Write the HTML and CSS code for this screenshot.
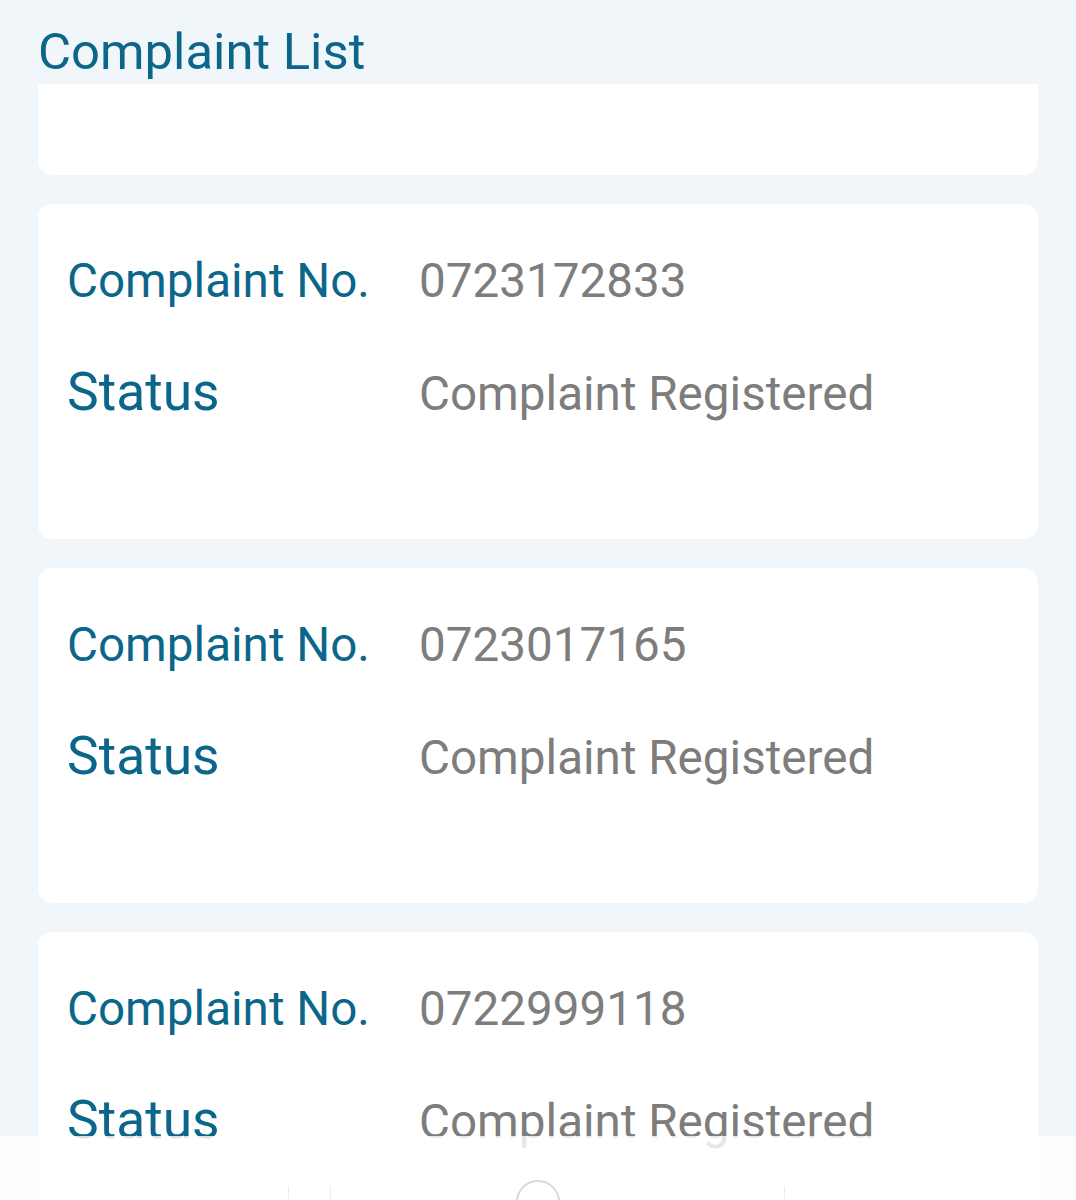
FILE: index.html
```html
<!DOCTYPE html>
<html lang="en">
<head>
<meta charset="utf-8">
<title>Complaint List</title>
<link rel="stylesheet" href="styles.css">
</head>
<body>
<header class="top">
  <h1 class="title">Complaint List</h1>
</header>
<main class="list">
  <div class="card card-partial"></div>
  <div class="card">
    <div class="row"><span class="label">Complaint No.</span><span class="value">0723172833</span></div>
    <div class="row"><span class="label label-big">Status</span><span class="value">Complaint Registered</span></div>
  </div>
  <div class="card">
    <div class="row"><span class="label">Complaint No.</span><span class="value">0723017165</span></div>
    <div class="row"><span class="label label-big">Status</span><span class="value">Complaint Registered</span></div>
  </div>
  <div class="card">
    <div class="row"><span class="label">Complaint No.</span><span class="value">0722999118</span></div>
    <div class="row"><span class="label label-big">Status</span><span class="value">Complaint Registered</span></div>
  </div>
</main>
<div class="navbar">
  <span class="tick tick-a"></span>
  <span class="tick tick-b"></span>
  <span class="home"></span>
  <span class="tick tick-c"></span>
</div>
</body>
</html>
```
FILE: styles.css
```css
html, body {
  margin: 0;
  padding: 0;
  background: #f1f6fa;
  font-family: Roboto, "Noto Sans", Arial, sans-serif;
  height: 1200px;
  overflow: hidden;
}
.top {
  height: 84px;
  padding-left: 38px;
  box-sizing: border-box;
  background: #f1f6fa;
}
.title {
  margin: 0;
  font-weight: 400;
  font-size: 50.8px;
  line-height: 50px;
  padding-top: 27px;
  color: #0b668a;
}
.list {
  display: flex;
  flex-direction: column;
  gap: 29px;
  padding: 0 38px;
  height: 1116px;
  overflow: hidden;
}
.card {
  flex: none;
  background: #ffffff;
  border-radius: 14px;
  height: 335px;
  box-sizing: border-box;
  padding: 49px 0 0 29px;
  display: flex;
  flex-direction: column;
  gap: 55px;
}
.card-partial {
  height: 91px;
  border-radius: 0 0 14px 14px;
  padding: 0;
}
.row {
  display: flex;
  align-items: baseline;
}
.label {
  width: 352px;
  flex: none;
  font-size: 47.6px;
  line-height: 56px;
  color: #0b668a;
}
.label-big {
  font-size: 53.4px;
}
.value {
  font-size: 47.6px;
  line-height: 56px;
  color: #7d7d7d;
}
.navbar {
  position: fixed;
  left: 0;
  right: 0;
  bottom: 0;
  height: 64px;
  background: rgba(255, 255, 255, 0.82);
}
.home {
  position: absolute;
  left: 516px;
  top: 44px;
  width: 40px;
  height: 40px;
  border: 2px solid #d9d9d9;
  border-radius: 50%;
}
.tick {
  position: absolute;
  top: 50px;
  width: 1px;
  height: 14px;
  background: #ececec;
}
.tick-a { left: 288px; }
.tick-b { left: 330px; }
.tick-c { left: 784px; }
```
